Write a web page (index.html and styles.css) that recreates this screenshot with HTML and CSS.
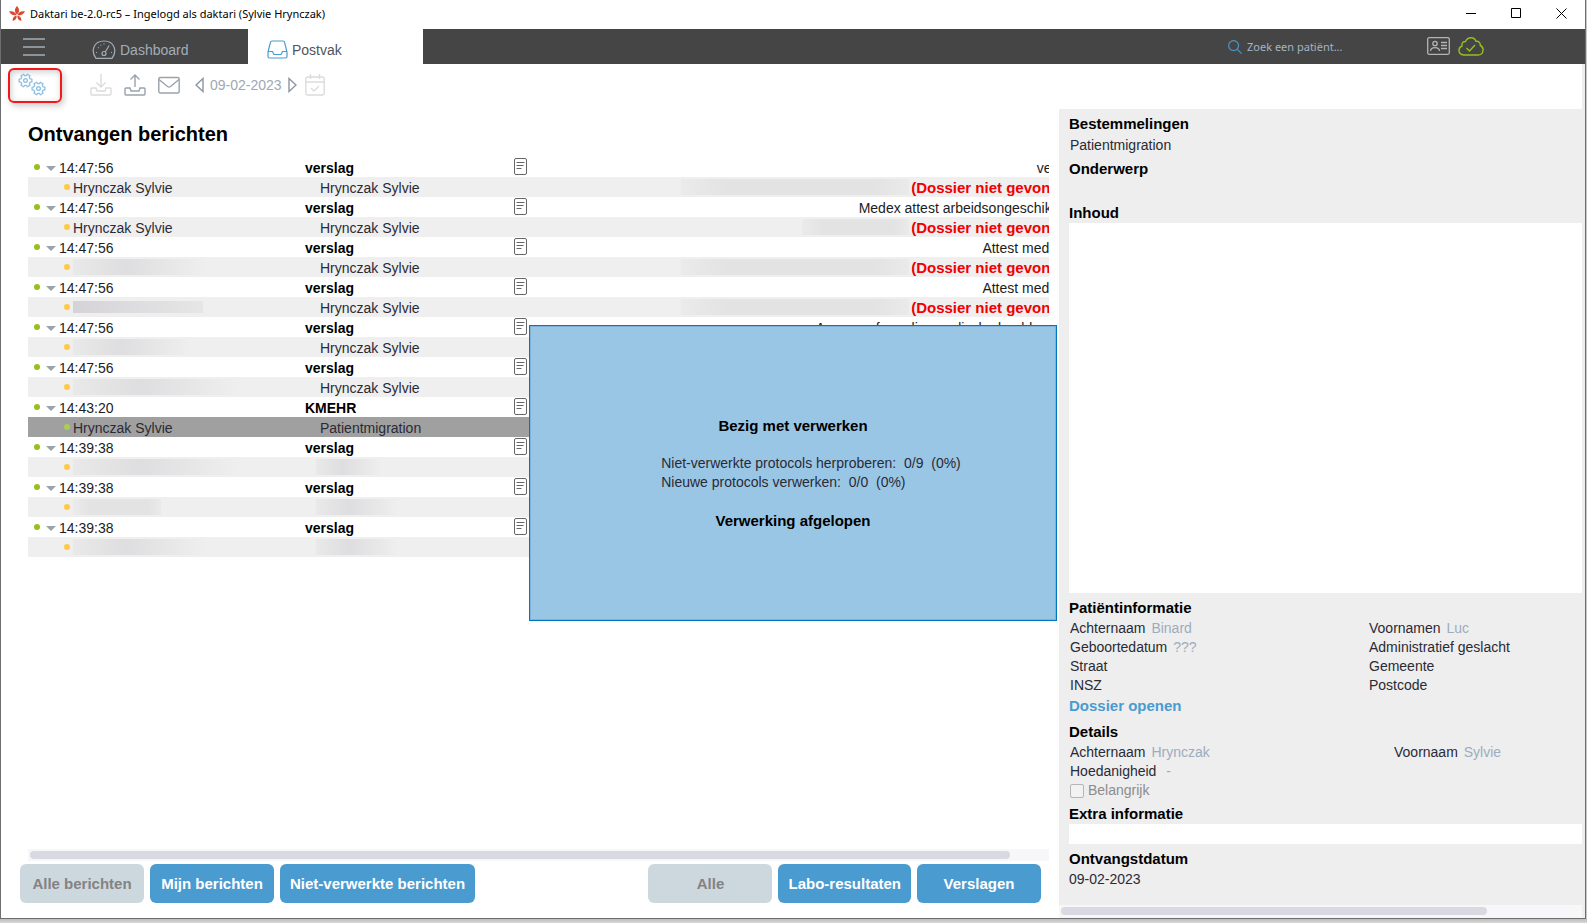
FILE: index.html
```html
<!DOCTYPE html>
<html lang="nl">
<head>
<meta charset="utf-8">
<title>Daktari be-2.0-rc5 – Ingelogd als daktari (Sylvie Hrynczak)</title>
<link rel="stylesheet" href="styles.css">
</head>
<body>
<svg class="defs" aria-hidden="true">
  <symbol id="doc" viewBox="0 0 13 17"><rect x=".5" y=".5" width="12" height="16" rx="1.5" fill="#fff" stroke="#666"/><path d="M3 5h8M3 8h7M3 11h5" stroke="#666" fill="none" transform="translate(-.5 -.5)"/></symbol>
  <symbol id="gear" viewBox="-8 -8 16 16"><path d="M4.980-1.810L6.820-1.570V1.570L4.980 1.810L4.060 3.410L4.770 5.120L2.050 6.690L.920 5.220H-.920L-2.050 6.690L-4.770 5.120L-4.060 3.410L-4.980 1.810L-6.820 1.570V-1.570L-4.980-1.810L-4.060-3.410L-4.770-5.120L-2.050-6.690L-.920-5.220H.920L2.050-6.690L4.770-5.120L4.060-3.410Z" fill="none" stroke="currentColor" stroke-width="1.400" stroke-linejoin="round"/><circle r="2" fill="none" stroke="currentColor" stroke-width="1.400"/></symbol>
</svg>
<div class="window">
  <header class="titlebar">
    <svg class="logo" viewBox="0 0 16 16"><path d="M8 8.500C5 6 5.500 2.500 8 0c2.500 2.500 3 6 0 8.500zM7.500 9C4.500 10 1.500 8.500 0 5.500c3.500-.8 6.500.5 7.500 3.500zM8.500 9c1-3 4-4.300 7.500-3.500-1.500 3-4.500 4.500-7.500 3.500zM7.600 9.500c.4 3-1.200 5-4 5.500-.2-3 1.200-5 4-5.500zM8.400 9.500c2.800.5 4.200 2.500 4 5.500-2.800-.5-4.400-2.500-4-5.500z"/></svg>
    <span class="apptitle">Daktari be-2.0-rc5 – Ingelogd als daktari (Sylvie Hrynczak)</span>
    <div class="controls">
      <button aria-label="Minimaliseren"><svg viewBox="0 0 11 11"><path d="M0 5.500h10"/></svg></button>
      <button aria-label="Maximaliseren"><svg viewBox="0 0 11 11"><path d="M.5.500h9v9h-9z"/></svg></button>
      <button aria-label="Sluiten"><svg viewBox="0 0 11 11"><path d="M.5.500l10 10M10.500.500l-10 10"/></svg></button>
    </div>
  </header>
  <div class="client">
    <nav class="navbar">
      <button class="menu" aria-label="Menu"><svg viewBox="0 0 22 18"><path d="M0 1h22M0 9h22M0 17h22"/></svg></button>
      <a class="tab" href="#"><svg class="tabicon gauge" viewBox="0 0 24 19"><path d="M4 18.300C-1.500 11 1.500 1 12 1s13.500 10 8 17.300z"/><circle cx="12" cy="13.500" r="2"/><path d="M13.200 12l4-6.500M12 3.500v1M5 12.500H4M20 12.500h-1M6 7.500l.8.600M8.500 4.800l.4.800"/></svg>Dashboard</a>
      <a class="tab active" href="#"><svg class="tabicon inbox" viewBox="0 0 21 19"><path d="M1 12L3.500 2.200Q3.800 1 5 1h11q1.200 0 1.500 1.200L20 12v4.500q0 1.500-1.500 1.500h-16Q1 18 1 16.500zM1 11.500h4.500l1.500 3h7l1.500-3H20"/></svg>Postvak</a>
      <label class="search"><svg viewBox="0 0 15 15"><circle cx="6" cy="6" r="5.300"/><path d="M10 10l4.500 4.500"/></svg><input type="text" placeholder="Zoek een patiënt..." aria-label="Zoek een patiënt"></label>
      <div class="status">
        <svg class="idcard" viewBox="0 0 23 18"><rect x=".7" y=".7" width="21.600" height="16.600" rx="1.500"/><circle cx="8" cy="6.500" r="2.200"/><path d="M3.500 14c.3-4.500 8.700-4.500 9 0M14 5.500h6M14 8.500h6M14 11.500h6"/></svg>
        <svg class="cloud" viewBox="0 0 26 19"><path d="M6 18C2 18 .8 15 1 13c.2-2 1.200-3.300 3-4C3.500 6 5 4.500 7.500 4.500 9 1.500 11 .8 13 .8c2.500 0 4.200 1.400 5 3.500 2.500-.3 4.500 1.200 4.300 4.200C24.500 9.500 25.300 11.500 25 13.500c-.3 3-2.500 4.500-5 4.500zM8.500 11l3 3 5.500-6"/></svg>
      </div>
    </nav>
    <div class="toolbar">
      <button class="process" aria-label="Verwerken"><svg viewBox="0 0 28 23"><use href="#gear" x="0" y="0" width="15" height="15"/><use href="#gear" x="13" y="8" width="15" height="15"/></svg></button>
      <button class="tool off" aria-label="Ontvangen"><svg viewBox="0 0 22 22"><path d="M11 0v12.500M6.500 8.500L11 13l4.500-4.500M6 14H2q-1 0-1 1v5q0 1 1 1h18q1 0 1-1v-5q0-1-1-1h-4l-1 3H7z"/></svg></button>
      <button class="tool" aria-label="Verzenden"><svg viewBox="0 0 22 22"><path d="M11 13V1M6.500 5.500L11 1l4.500 4.500M6 14H2q-1 0-1 1v5q0 1 1 1h18q1 0 1-1v-5q0-1-1-1h-4l-1 3H7z"/></svg></button>
      <button class="tool" aria-label="Nieuw bericht"><svg viewBox="0 0 22 22"><rect x=".8" y="3.500" width="20.400" height="15.500" rx="1.500"/><path d="M1 5.500l8.500 7q1.500 1 3 0l8.500-7"/></svg></button>
      <div class="date">
        <button aria-label="Vorige dag"><svg viewBox="0 0 9 16"><path d="M8 1.500v13L1 8z"/></svg></button>
        <span>09-02-2023</span>
        <button aria-label="Volgende dag"><svg viewBox="0 0 9 16"><path d="M1 1.500v13L8 8z"/></svg></button>
      </div>
      <button class="cal off" aria-label="Vandaag"><svg viewBox="0 0 20 22"><rect x=".8" y="3" width="18.400" height="18" rx="2"/><path d="M1 8h18M5.500 0v5M14.500 0v5M6 14l3 3 5-5"/></svg></button>
    </div>
    <div class="main">
      <main class="messages">
        <h1>Ontvangen berichten</h1>
        <div class="list">
          <table>
            <colgroup><col class="c-from"><col class="c-type"><col class="c-doc"><col></colgroup>
            <tbody>
              <tr><td><i class="dot"></i><i class="tri"></i>14:47:56</td><th scope="row">verslag</th><td><svg class="doc"><use href="#doc"/></svg></td><td class="subj">verslag</td></tr>
              <tr class="sub"><td><i class="dot"></i>Hrynczak Sylvie</td><td>Hrynczak Sylvie</td><td></td><td class="subj"><i class="mask w228"></i><b>(Dossier niet gevonden)</b></td></tr>
              <tr><td><i class="dot"></i><i class="tri"></i>14:47:56</td><th scope="row">verslag</th><td><svg class="doc"><use href="#doc"/></svg></td><td class="subj">Medex attest arbeidsongeschiktheid</td></tr>
              <tr class="sub"><td><i class="dot"></i>Hrynczak Sylvie</td><td>Hrynczak Sylvie</td><td></td><td class="subj"><i class="mask w107"></i><b>(Dossier niet gevonden)</b></td></tr>
              <tr><td><i class="dot"></i><i class="tri"></i>14:47:56</td><th scope="row">verslag</th><td><svg class="doc"><use href="#doc"/></svg></td><td class="subj">Attest medicatie</td></tr>
              <tr class="sub"><td><i class="dot"></i><i class="mask fade w133"></i></td><td>Hrynczak Sylvie</td><td></td><td class="subj"><i class="mask w228"></i><b>(Dossier niet gevonden)</b></td></tr>
              <tr><td><i class="dot"></i><i class="tri"></i>14:47:56</td><th scope="row">verslag</th><td><svg class="doc"><use href="#doc"/></svg></td><td class="subj">Attest medicatie</td></tr>
              <tr class="sub"><td><i class="dot"></i><i class="mask dark w130"></i></td><td>Hrynczak Sylvie</td><td></td><td class="subj"><i class="mask w228"></i><b>(Dossier niet gevonden)</b></td></tr>
              <tr><td><i class="dot"></i><i class="tri"></i>14:47:56</td><th scope="row">verslag</th><td><svg class="doc"><use href="#doc"/></svg></td><td class="subj">Aanvraagformulier medische beeldvorming</td></tr>
              <tr class="sub"><td><i class="dot"></i><i class="mask fade w119"></i></td><td>Hrynczak Sylvie</td><td></td><td></td></tr>
              <tr><td><i class="dot"></i><i class="tri"></i>14:47:56</td><th scope="row">verslag</th><td><svg class="doc"><use href="#doc"/></svg></td><td></td></tr>
              <tr class="sub"><td><i class="dot"></i><i class="mask fade w168"></i></td><td>Hrynczak Sylvie</td><td></td><td></td></tr>
              <tr><td><i class="dot"></i><i class="tri"></i>14:43:20</td><th scope="row">KMEHR</th><td><svg class="doc"><use href="#doc"/></svg></td><td></td></tr>
              <tr class="sub selected"><td><i class="dot"></i>Hrynczak Sylvie</td><td>Patientmigration</td><td></td><td></td></tr>
              <tr><td><i class="dot"></i><i class="tri"></i>14:39:38</td><th scope="row">verslag</th><td><svg class="doc"><use href="#doc"/></svg></td><td></td></tr>
              <tr class="sub"><td><i class="dot"></i><i class="mask fade w168"></i></td><td><i class="mask fade type w66"></i></td><td></td><td></td></tr>
              <tr><td><i class="dot"></i><i class="tri"></i>14:39:38</td><th scope="row">verslag</th><td><svg class="doc"><use href="#doc"/></svg></td><td></td></tr>
              <tr class="sub"><td><i class="dot"></i><i class="mask w88"></i></td><td><i class="mask fade type w83"></i></td><td></td><td></td></tr>
              <tr><td><i class="dot"></i><i class="tri"></i>14:39:38</td><th scope="row">verslag</th><td><svg class="doc"><use href="#doc"/></svg></td><td></td></tr>
              <tr class="sub"><td><i class="dot"></i><i class="mask fade w133"></i></td><td><i class="mask fade type w83"></i></td><td></td><td></td></tr>
            </tbody>
          </table>
        </div>
        <div class="track"><div class="thumb"></div></div>
        <div class="filters">
          <button disabled>Alle berichten</button>
          <button>Mijn berichten</button>
          <button>Niet-verwerkte berichten</button>
          <button class="push" disabled>Alle</button>
          <button>Labo-resultaten</button>
          <button>Verslagen</button>
        </div>
      </main>
      <aside class="detail">
        <div class="detail-body">
          <h2>Bestemmelingen</h2>
          <p class="recipient">Patientmigration</p>
          <h2 class="subject">Onderwerp</h2>
          <h2>Inhoud</h2>
          <div class="content"></div>
          <h2 class="patient">Patiëntinformatie</h2>
          <div class="fields">
            <p>Achternaam <span>Binard</span></p><p>Voornamen <span>Luc</span></p>
            <p>Geboortedatum <span>???</span></p><p>Administratief geslacht</p>
            <p>Straat</p><p>Gemeente</p>
            <p>INSZ</p><p>Postcode</p>
          </div>
          <a class="open" href="#">Dossier openen</a>
          <h2 class="details">Details</h2>
          <div class="fields person">
            <p>Achternaam <span>Hrynczak</span></p><p>Voornaam <span>Sylvie</span></p>
            <p>Hoedanigheid <span class="dash">-</span></p>
          </div>
          <label class="check"><input type="checkbox" disabled>Belangrijk</label>
          <h2 class="extra">Extra informatie</h2>
          <div class="extrabox"></div>
          <h2 class="received">Ontvangstdatum</h2>
          <p class="received-date">09-02-2023</p>
        </div>
        <div class="track"><div class="thumb"></div></div>
      </aside>
    </div>
    <div class="overlay">
      <div class="dialog" role="dialog" aria-label="Bezig met verwerken">
        <strong>Bezig met verwerken</strong>
        <div class="progress">
          <p>Niet-verwerkte protocols herproberen:&nbsp; 0/9&nbsp; (0%)</p>
          <p>Nieuwe protocols verwerken:&nbsp; 0/0&nbsp; (0%)</p>
        </div>
        <strong>Verwerking afgelopen</strong>
      </div>
    </div>
  </div>
</div>
</body>
</html>
```
FILE: styles.css
```css
* { box-sizing: border-box; }
body {
  margin: 0;
  height: 100vh;
  padding: 0 1px 4px 0;
  background: linear-gradient(#bdbdbd, #d8d8d8) bottom / 100% 4px no-repeat #c8c8c8;
  font: 14px/20px "Liberation Sans", Arial, sans-serif;
  color: #2a2a35;
  overflow: hidden;
}
button { border: 0; padding: 0; background: none; font: inherit; color: inherit; }
svg { display: block; fill: none; }
h1, h2, p { margin: 0; }
a { text-decoration: none; }
.defs { position: absolute; width: 0; height: 0; }

.window {
  height: 100%;
  display: flex;
  flex-direction: column;
  border: 1px solid #6e6e6e;
  border-top: 0;
  background: #fff;
}
.titlebar {
  height: 29px;
  display: flex;
  align-items: center;
  gap: 5px;
  padding: 0 1px 2px 8px;
  font: 11px/16px "Noto Sans", sans-serif;
  color: #000;
}
.logo { width: 16px; height: 16px; fill: #d9492f; }
.controls { display: flex; margin-left: auto; }
.controls button { width: 45px; height: 27px; display: grid; place-items: center; }
.controls svg { width: 11px; height: 11px; stroke: #000; }

.client { position: relative; flex: 1; min-height: 0; display: flex; flex-direction: column; }
.navbar { height: 35px; display: flex; align-items: center; background: #454545; color: #a3adb8; }
.menu { width: 66px; display: grid; place-items: center; }
.menu svg { width: 22px; height: 18px; stroke: #a3adb8; stroke-width: 1.5; }
.tab {
  align-self: stretch;
  display: flex;
  align-items: center;
  gap: 4px;
  width: 181px;
  padding: 6px 0 0 25px;
  font-size: 14px;
  color: #a3adb8;
}
.tab.active { width: 175px; padding-left: 19px; background: #fff; color: #4f5560; }
.tabicon { height: 19px; stroke: currentColor; stroke-width: 1.2; }
.gauge { width: 24px; }
.inbox { width: 21px; stroke: #4a9bd0; }
.search { display: flex; align-items: center; gap: 5px; margin-left: auto; }
.search svg { width: 14px; height: 14px; stroke: #4a9bd0; stroke-width: 1.2; }
.search input {
  width: 130px;
  padding: 0;
  border: 0;
  background: none;
  font: 11px/16px "Noto Sans", sans-serif;
}
.search input::placeholder { color: #a3b4c4; opacity: 1; }
.status { display: flex; gap: 8px; margin: 0 101px 0 50px; }
.idcard { width: 23px; height: 18px; stroke: #b5b5b5; stroke-width: 1.3; }
.cloud { width: 26px; height: 19px; stroke: #95c11f; stroke-width: 1.4; }

.toolbar { height: 45px; display: flex; align-items: center; padding: 0 0 3px 7px; border-right: 3px solid #eee; color: #9aa2ad; }
.toolbar svg { stroke: currentColor; stroke-width: 1.4; }
.process {
  width: 54px;
  height: 35px;
  margin-right: 28px;
  padding: 0 0 2px 8px;
  border: 2px solid #f01818;
  border-radius: 6px;
  box-shadow: 2px 3px 6px rgba(0, 0, 0, .2), inset 1px 2px 6px rgba(0, 0, 0, .2);
  color: #8dbfe2;
}
.toolbar .process svg { width: 28px; height: 23px; stroke: none; }
.tool { margin-right: 12px; }
.tool svg { width: 22px; height: 22px; }
.toolbar .off { color: #dcdcdc; }
.date { display: flex; align-items: center; gap: 6px; color: #a0a8b2; margin: 0 8px 0 3px; }
.date svg { width: 9px; height: 16px; stroke: #8c95a1; }
.cal svg { width: 20px; height: 22px; }

.main { flex: 1; min-height: 0; display: grid; grid-template-columns: minmax(0, 1058fr) minmax(0, 526fr); }
.messages { display: flex; flex-direction: column; padding: 0 10px 15px 27px; min-height: 0; }
h1 { margin: 11px 0 9px; font-size: 20px; line-height: 28px; color: #000; }
.list { flex: 1; min-height: 0; overflow: hidden; }
table { width: calc(100% + 33px); table-layout: fixed; border-collapse: collapse; }
.c-from { width: 277px; }
.c-type { width: 209px; }
.c-doc { width: 16px; }
td, th { height: 20px; padding: 2px 0 0; text-align: left; white-space: nowrap; line-height: 18px; color: #1c1c22; }
th { color: #000; }
td:first-child { padding-left: 6px; }
td:nth-child(3) { padding: 0 0 1px; }
tr.sub { background: #efefef; }
tr.sub td { color: #2a2a35; }
tr.sub td:first-child { padding-left: 36px; }
tr.sub td:nth-child(2) { padding-left: 15px; }
td.subj { text-align: right; }
.subj b { font-size: 15px; color: #f00000; }
tr.selected { background: #a0a0a0; }
.dot { display: inline-block; width: 6px; height: 6px; margin: 0 6px 4px 0; border-radius: 50%; background: #95c11f; vertical-align: middle; }
.sub .dot { margin-right: 3px; background: #ffcb45; }
tr.selected .dot { background: #a9ce52; }
.tri { display: inline-block; margin: 0 3px 2px 0; border: 5px solid transparent; border-top: 5px solid #9aa3ae; border-bottom: 0; vertical-align: middle; }
.doc { width: 13px; height: 17px; }
.mask { display: inline-block; height: 16px; margin-right: 2px; background: linear-gradient(90deg, #ebebeb, #e3e3e4 20%, #e3e3e4 85%, #eaeaea); vertical-align: top; }
.mask.fade { background: linear-gradient(90deg, #e9e9e9, #dedee0 40%, #efefef); }
.mask.dark { margin-top: 2px; background: linear-gradient(90deg, #d5d3d7, #e6e6e6); height: 12px; }
.mask.type { margin-left: -4px; }
.w66 { width: 66px; }
.w83 { width: 83px; }
.w88 { width: 88px; }
.w107 { width: 107px; }
.w119 { width: 119px; }
.w130 { width: 130px; }
.w133 { width: 133px; }
.w168 { width: 168px; }
.w228 { width: 228px; }

.track { height: 12px; padding: 2px; background: #f7f7f9; }
.thumb { width: calc(100% - 37px); height: 8px; border-radius: 4px; background: #d9d9e2; }
.filters { display: flex; gap: 6px; margin: 3px 8px 0 -8px; }
.filters button {
  min-width: 124px;
  height: 39px;
  padding: 0 10px;
  border-radius: 6px;
  background: #4a9bd0;
  font-size: 15px;
  font-weight: bold;
  color: #fff;
}
.filters button:disabled { background: #cdd8de; color: #838383; }
.filters .push { margin-left: auto; }

.detail { display: flex; flex-direction: column; padding-right: 3px; background: #eee; }
.detail-body { flex: 1; min-height: 0; display: flex; flex-direction: column; padding: 5px 0 16px 10px; }
h2 { font-size: 15px; line-height: 20px; color: #000; }
.recipient { padding: 1px 0 0 1px; }
.subject { margin: 4px 0 24px; }
.content { flex: 1; background: #fff; }
.patient { margin: 5px 0 1px; }
.fields { display: grid; grid-template-columns: 299px 1fr; padding-left: 1px; line-height: 19px; }
.fields.person { grid-template-columns: 324px 1fr; }
.fields span { margin-left: 2px; color: #9dacbd; }
.fields .dash { margin-left: 6px; }
.open { align-self: flex-start; margin-top: 1px; font-size: 15px; font-weight: bold; color: #4a9bd0; }
.details { margin: 6px 0 1px; }
.check { display: flex; align-items: center; gap: 4px; padding-left: 1px; line-height: 19px; color: #8c8c8c; }
.check input { appearance: none; width: 14px; height: 14px; margin: 0; border: 1px solid #b5b5b5; border-radius: 2px; background: #f2f2f2; }
.extra { margin-top: 4px; }
.extrabox { height: 20px; background: #fff; }
.received { margin-top: 5px; }
.detail .track { height: 13px; }
.detail .thumb { width: 82%; }

.overlay { position: absolute; inset: 0 0 2px; display: grid; place-items: center; }
.dialog {
  width: 528px;
  height: 296px;
  display: flex;
  flex-direction: column;
  align-items: center;
  justify-content: center;
  gap: 19px;
  border: 1px solid #0078c0;
  box-shadow: inset 0 0 0 1px #7fb2d8;
  background: #9ac6e5;
  line-height: 19px;
}
.dialog strong { font-size: 15px; color: #000; }
.progress { padding-left: 36px; }
```
